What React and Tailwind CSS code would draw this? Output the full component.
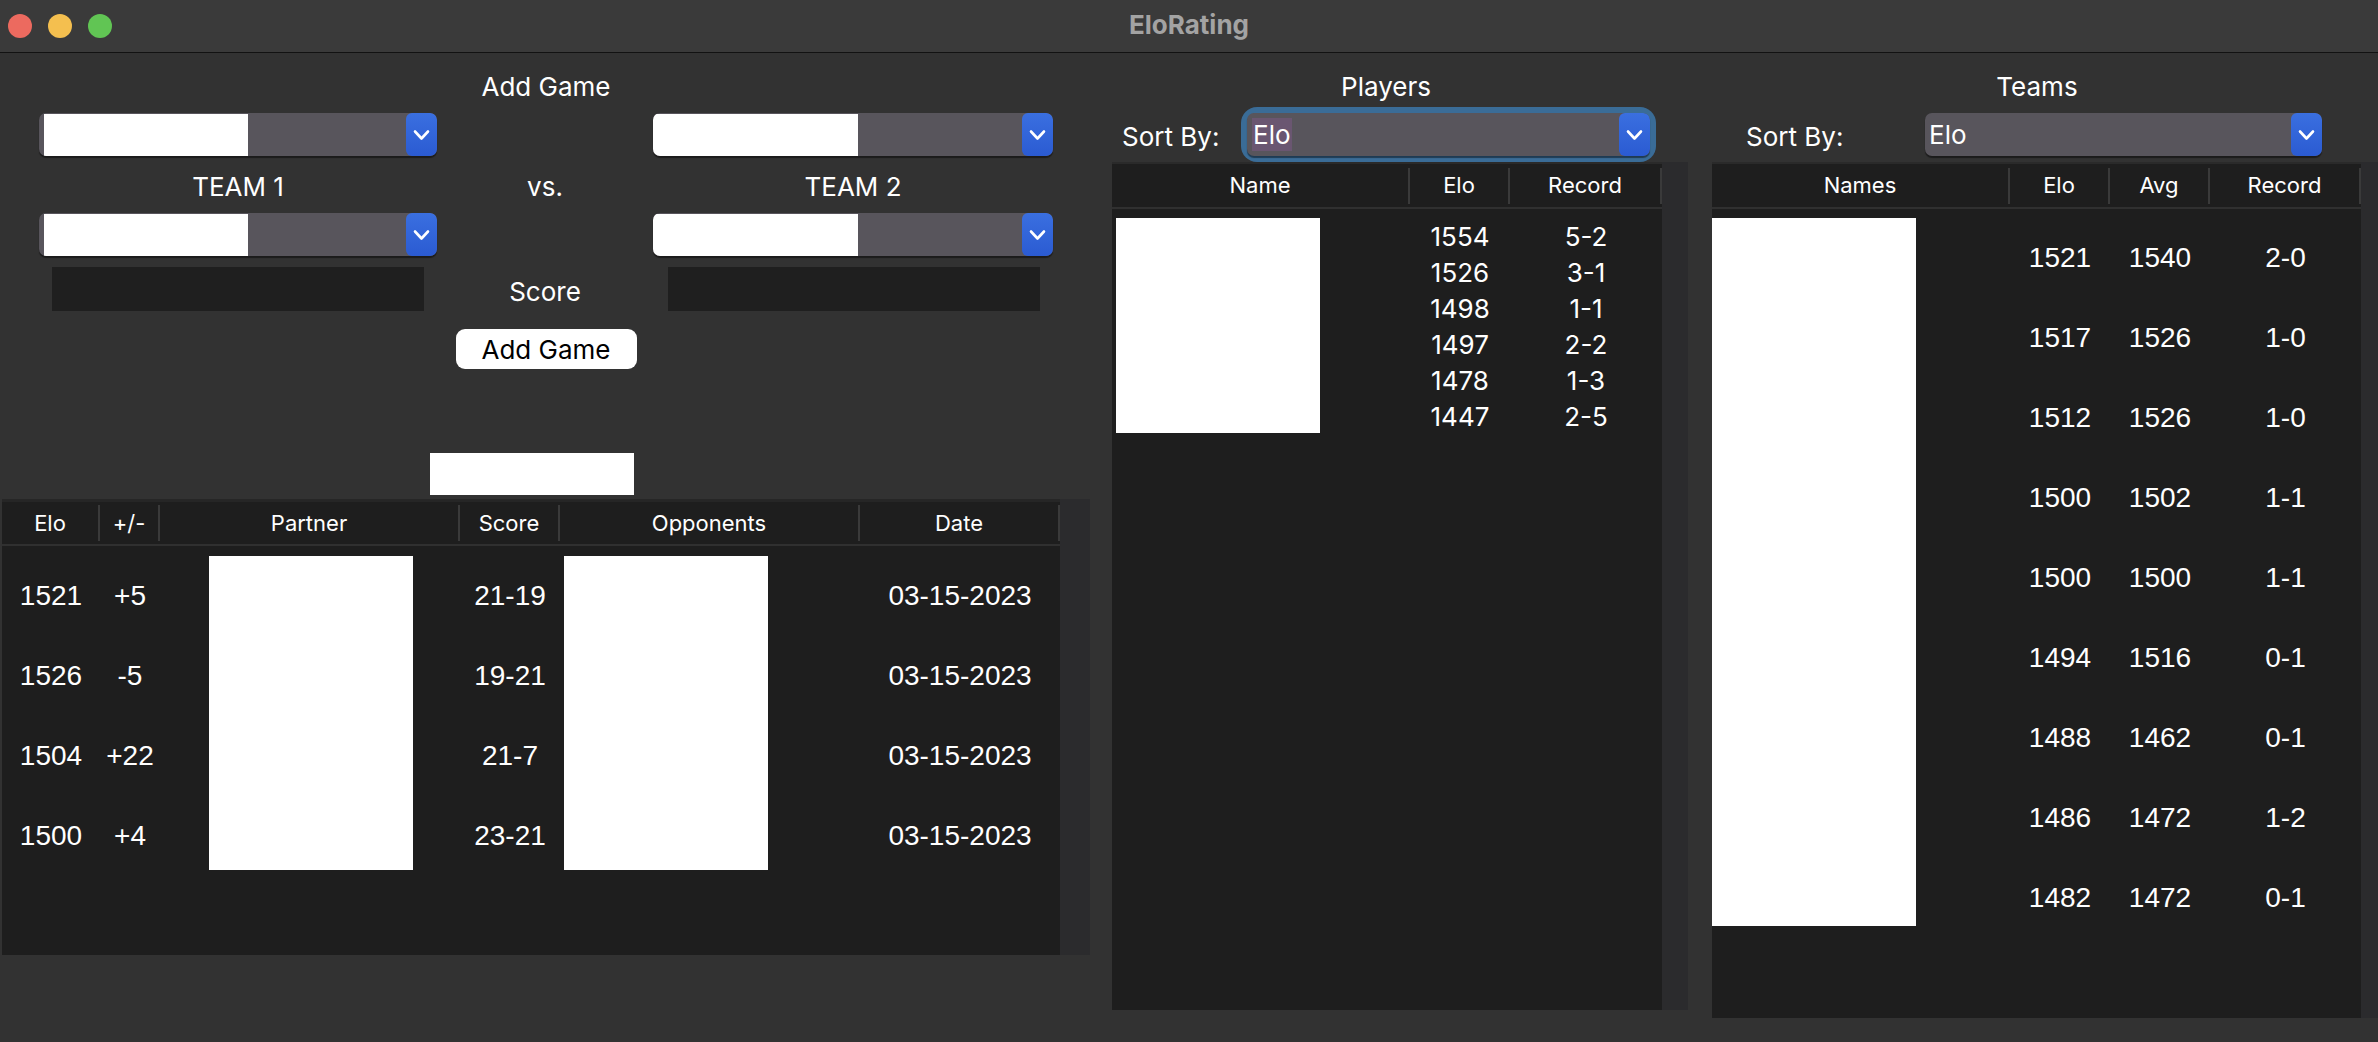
import React from "react";

/* ---------------- data ---------------- */

const games = [
  { elo: "1521", diff: "+5", score: "21-19" },
  { elo: "1526", diff: "-5", score: "19-21" },
  { elo: "1504", diff: "+22", score: "21-7" },
  { elo: "1500", diff: "+4", score: "23-21" },
];

const players = [
  ["1554", "5-2"],
  ["1526", "3-1"],
  ["1498", "1-1"],
  ["1497", "2-2"],
  ["1478", "1-3"],
  ["1447", "2-5"],
];

const teams = [
  ["1521", "1540", "2-0"],
  ["1517", "1526", "1-0"],
  ["1512", "1526", "1-0"],
  ["1500", "1502", "1-1"],
  ["1500", "1500", "1-1"],
  ["1494", "1516", "0-1"],
  ["1488", "1462", "0-1"],
  ["1486", "1472", "1-2"],
  ["1482", "1472", "0-1"],
];

const ROW_START = [
  "row-start-1",
  "row-start-2",
  "row-start-3",
  "row-start-4",
  "row-start-5",
  "row-start-6",
  "row-start-7",
  "row-start-8",
  "row-start-9",
];

/* ---------------- pieces ---------------- */

function Chevron() {
  return (
    <svg width="17" height="12" viewBox="0 0 17 12">
      <path
        d="M2 2.5 L8.5 9.5 L15 2.5"
        fill="none"
        stroke="white"
        strokeWidth="2.6"
        strokeLinecap="round"
        strokeLinejoin="round"
      />
    </svg>
  );
}

function Popup({ className, children }) {
  return (
    <div
      className={`flex h-[43px] items-stretch overflow-hidden rounded-[7px] bg-[#58555c] shadow-[0_2px_1px_rgba(0,0,0,0.45)] ${className}`}
    >
      <div className="flex min-w-0 flex-1 items-center">{children}</div>
      <div className="flex w-[31px] items-center justify-center rounded-[6px] bg-gradient-to-b from-[#3a6fe0] to-[#2b5bd2]">
        <Chevron />
      </div>
    </div>
  );
}

function HeadCell({ label }) {
  return (
    <div className="flex items-center">
      <div className="flex-1 text-center">{label}</div>
      <div className="h-[36px] w-[2px] bg-[#3a3a3a]" />
    </div>
  );
}

/* ---------------- sections ---------------- */

function AddGame() {
  return (
    <div className="flex w-[1090px] shrink-0 flex-col">
      <div className="ml-[39px] mt-[18px] h-[32px] w-[1014px] text-center leading-[32px]">
        Add Game
      </div>

      <div className="ml-[39px] mt-[10px] grid grid-cols-[398px_216px_400px] grid-rows-[43px_57px_43px]">
        <Popup className="w-[398px]">
          <div className="ml-[5px] h-[42px] w-[204px] bg-white" />
        </Popup>
        <div />
        <Popup className="w-[400px]">
          <div className="h-[42px] w-[205px] bg-white" />
        </Popup>

        <div className="flex items-center justify-center pt-[4px]">TEAM 1</div>
        <div className="flex items-center justify-center pt-[4px]">vs.</div>
        <div className="flex items-center justify-center pt-[4px]">TEAM 2</div>

        <Popup className="w-[398px]">
          <div className="ml-[5px] h-[42px] w-[204px] bg-white" />
        </Popup>
        <div />
        <Popup className="w-[400px]">
          <div className="h-[42px] w-[205px] bg-white" />
        </Popup>
      </div>

      <div className="ml-[39px] mt-[11px] grid h-[44px] grid-cols-[398px_216px_400px]">
        <div className="ml-[13px] h-[44px] w-[372px] bg-[#1f1f1f]" />
        <div className="flex items-center justify-center pt-[4px]">Score</div>
        <div className="ml-[15px] h-[44px] w-[372px] bg-[#1f1f1f]" />
      </div>

      <div className="ml-[39px] mt-[18px] flex w-[1014px] justify-center">
        <button className="h-[40px] w-[181px] rounded-[9px] bg-white text-black">
          Add Game
        </button>
      </div>

      <div className="ml-[430px] mt-[84px] h-[42px] w-[204px] bg-white" />

      <div className="ml-[2px] mt-[4px] flex h-[456px]">
        <div className="flex w-[1058px] flex-col border-t-[3px] border-[#262626] bg-[#1e1e1e]">
          <div className="grid h-[44px] grid-cols-[98px_60px_300px_100px_300px_200px] border-b-2 border-[#303030] text-[22px]">
            <HeadCell label="Elo" />
            <HeadCell label="+/-" />
            <HeadCell label="Partner" />
            <HeadCell label="Score" />
            <HeadCell label="Opponents" />
            <HeadCell label="Date" />
          </div>
          <div className="grid grid-cols-[98px_60px_300px_100px_300px_200px] grid-rows-[repeat(4,80px)] pt-[8px] font-['Liberation_Sans',Arial,sans-serif] text-[28px]">
            {games.map((g, i) => (
              <React.Fragment key={i}>
                <div className={`col-start-1 ${ROW_START[i]} flex items-center justify-center pt-[4px]`}>
                  {g.elo}
                </div>
                <div className={`col-start-2 ${ROW_START[i]} flex items-center justify-center pt-[4px]`}>
                  {g.diff}
                </div>
                <div className={`col-start-4 ${ROW_START[i]} flex items-center justify-center pt-[4px]`}>
                  {g.score}
                </div>
                <div className={`col-start-6 ${ROW_START[i]} flex items-center justify-center pt-[4px]`}>
                  03-15-2023
                </div>
              </React.Fragment>
            ))}
            <div className="col-start-3 row-span-4 row-start-1">
              <div className="ml-[49px] mt-[2px] h-[314px] w-[204px] bg-white" />
            </div>
            <div className="col-start-5 row-span-4 row-start-1">
              <div className="ml-[4px] mt-[2px] h-[314px] w-[204px] bg-white" />
            </div>
          </div>
        </div>
        <div className="w-[30px] bg-[#2b2b2d]" />
      </div>
    </div>
  );
}

function Players() {
  return (
    <div className="flex w-[600px] shrink-0 flex-col">
      <div className="mt-[18px] h-[32px] pr-[8px] text-center leading-[32px]">Players</div>

      <div className="mt-[10px] flex h-[43px] items-center pl-[32px]">
        <div className="w-[125px] pt-[4px]">Sort By:</div>
        <div className="rounded-[10px] shadow-[0_0_0_6px_#3a6c97]">
          <Popup className="w-[403px]">
            <span className="ml-[5px] bg-[#6a5671] px-[1px] leading-[33px]">Elo</span>
          </Popup>
        </div>
      </div>

      <div className="ml-[22px] mt-[6px] flex h-[848px]">
        <div className="flex w-[550px] flex-col border-t-2 border-[#2a2a2a] bg-[#1e1e1e]">
          <div className="grid h-[45px] grid-cols-[298px_100px_152px] border-b-2 border-[#303030] text-[22px]">
            <HeadCell label="Name" />
            <HeadCell label="Elo" />
            <HeadCell label="Record" />
          </div>
          <div className="grid grid-cols-[298px_100px_152px] grid-rows-[repeat(6,36px)] pt-[9px]">
            {players.map((p, i) => (
              <React.Fragment key={i}>
                <div className={`col-start-2 ${ROW_START[i]} flex items-center justify-center`}>
                  {p[0]}
                </div>
                <div className={`col-start-3 ${ROW_START[i]} flex items-center justify-center`}>
                  {p[1]}
                </div>
              </React.Fragment>
            ))}
            <div className="col-start-1 row-span-6 row-start-1">
              <div className="ml-[4px] h-[215px] w-[204px] bg-white" />
            </div>
          </div>
        </div>
        <div className="w-[26px] bg-[#2b2b2d]" />
      </div>
    </div>
  );
}

function Teams() {
  return (
    <div className="flex min-w-0 flex-1 flex-col">
      <div className="mt-[18px] h-[32px] pl-[6px] text-center leading-[32px]">Teams</div>

      <div className="mt-[10px] flex h-[43px] items-center pl-[56px]">
        <div className="w-[179px] pt-[4px]">Sort By:</div>
        <Popup className="w-[397px]">
          <span className="ml-[4px]">Elo</span>
        </Popup>
      </div>

      <div className="ml-[22px] mt-[6px] flex h-[856px]">
        <div className="flex w-[649px] flex-col border-t-2 border-[#2a2a2a] bg-[#1e1e1e]">
          <div className="grid h-[45px] grid-cols-[298px_100px_100px_151px] border-b-2 border-[#303030] text-[22px]">
            <HeadCell label="Names" />
            <HeadCell label="Elo" />
            <HeadCell label="Avg" />
            <HeadCell label="Record" />
          </div>
          <div className="grid grid-cols-[298px_100px_100px_151px] grid-rows-[repeat(9,80px)] pt-[7px] font-['Liberation_Sans',Arial,sans-serif] text-[28px]">
            {teams.map((t, i) => (
              <React.Fragment key={i}>
                <div className={`col-start-2 ${ROW_START[i]} flex items-center justify-center pt-[4px]`}>
                  {t[0]}
                </div>
                <div className={`col-start-3 ${ROW_START[i]} flex items-center justify-center pt-[4px]`}>
                  {t[1]}
                </div>
                <div className={`col-start-4 ${ROW_START[i]} flex items-center justify-center pt-[4px]`}>
                  {t[2]}
                </div>
              </React.Fragment>
            ))}
            <div className="col-start-1 row-span-9 row-start-1">
              <div className="mt-[2px] h-[708px] w-[204px] bg-white" />
            </div>
          </div>
        </div>
        <div className="w-[17px] bg-[#2b2b2d]" />
      </div>
    </div>
  );
}

/* ---------------- main ---------------- */

export default function App() {
  return (
    <div className="flex h-[1042px] w-[2378px] flex-col overflow-hidden bg-[#323232] font-['Inter',sans-serif] text-[26px] text-white">
      <div className="flex h-[53px] shrink-0 items-center border-b border-[#121212] bg-[#3a3a3a]">
        <div className="flex w-[300px] items-center gap-[16px] pl-[8px]">
          <div className="h-[24px] w-[24px] rounded-full bg-[#ec6a5f]" />
          <div className="h-[24px] w-[24px] rounded-full bg-[#f4bf4f]" />
          <div className="h-[24px] w-[24px] rounded-full bg-[#61c554]" />
        </div>
        <div className="flex-1 pb-[4px] text-center text-[26px] font-bold text-[#a3a3a3]">
          EloRating
        </div>
        <div className="w-[300px]" />
      </div>

      <div className="flex flex-1">
        <AddGame />
        <Players />
        <Teams />
      </div>
    </div>
  );
}
